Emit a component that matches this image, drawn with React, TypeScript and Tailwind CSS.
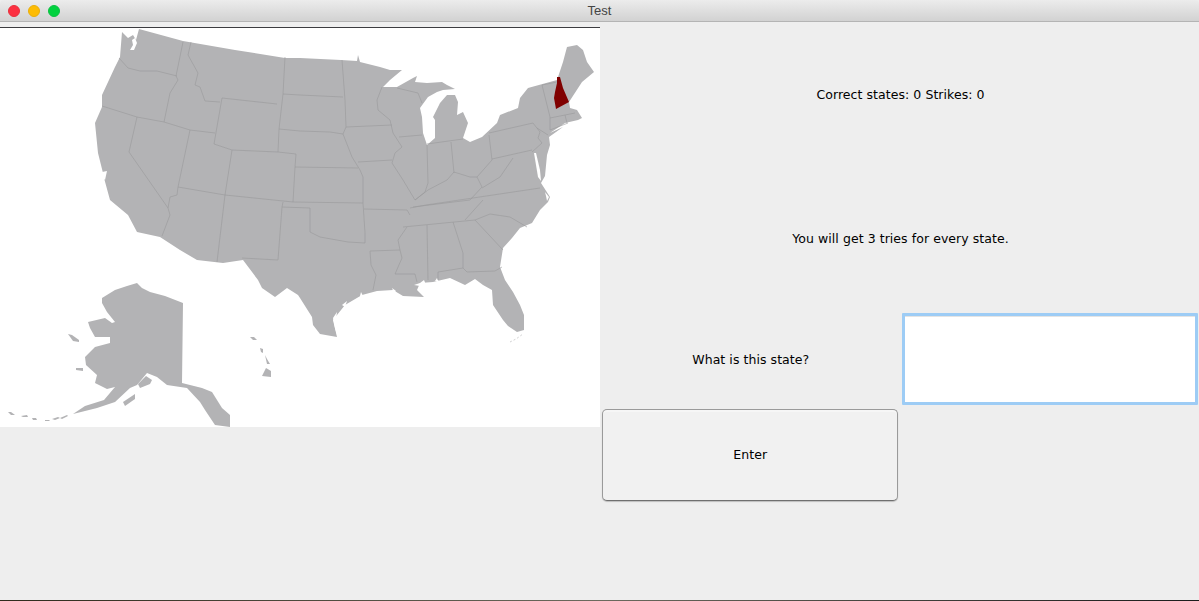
const BORDERS = [
  // west
  "M119 58 128 68 140 71 157 71 177 76",
  "M183 42 176 76 178 80 170 93 164 122",
  "M102 106 137 117 164 122 190 130 215 133",
  "M191 42 188 55 198 73 195 85 200 87 205 101 220 102",
  "M222 98 277 104",
  "M222 98 214 144 232 150 278 152 296 154",
  "M285 57 283 94 279 129 278 152",
  "M283 94 300 95 343 97",
  "M279 129 300 131 330 132 343 134",
  "M296 154 295 167 293 202",
  "M232 150 225 195 293 202",
  "M190 130 178 187 225 195",
  "M225 195 217 262",
  "M137 117 129 152 168 208 170 197 177 195 178 187",
  "M168 208 170 215 162 236",
  "M283 202 282 207 310 208",
  "M282 207 278 260 242 258",
  // plains
  "M295 167 358 168",
  "M293 202 363 203",
  "M310 208 310 232 320 237 348 242 365 243",
  "M364 209 407 210 410 215",
  "M360 170 363 177 363 203 365 233 365 243",
  "M343 134 352 157 360 170",
  "M346 127 392 125",
  "M342 60 345 100 346 127 343 134",
  "M382 87 377 100 378 110 390 120 393 133 402 147 395 153 392 163 403 180 415 200",
  "M358 162 392 160",
  "M399 137 422 135",
  "M427 145 428 183 425 192 415 200",
  // great lakes, ohio valley
  "M397 88 418 93 422 103",
  "M451 142 454 173",
  "M427 144 463 139",
  "M489 135 492 160 477 177",
  "M415 200 428 190 447 180 454 172 470 177 477 177 482 187 470 200",
  "M413 207 470 200",
  "M410 208 426 205 540 188",
  "M403 227 475 220",
  "M465 220 483 200",
  "M482 188 500 177 513 158",
  "M492 159 532 150",
  "M489 133 533 123 540 132 538 138 542 143 532 152",
  "M542 85 550 117 550 130",
  "M537 128 548 135",
  "M550 118 575 113",
  "M550 130 568 123",
  "M565 115 567 123",
  "M542 85 557 82",
  // south
  "M427 225 428 280",
  "M407 227 398 240 400 250 402 258 395 274 415 274 417 282",
  "M370 251 400 250",
  "M370 251 371 265 376 275 373 290",
  "M453 222 463 253 463 268",
  "M438 272 463 268 467 272 495 271 502 267",
  "M438 272 438 280",
  "M475 220 503 250",
  "M475 220 490 214 510 217 527 227",
];

// white nicks in the coast: puget sound, chesapeake, sounds, gulf bays, panhandle channels
const SEA = [
  "M132 40 135 38 137 43 134 50 130 50 133 45Z",
  "M102 172 107 171 105 180 103 178Z",
  "M534 153 536 153 540 170 541 181 538 177 536 165Z",
  "M545 192 549 197 547 201 546 196Z",
  "M414 285 420 283 424 280 426 285 420 286Z",
  "M392 288 396 291 394 293Z",
  "M435 281 437 278 439 282Z",
  "M361 292 363 296 360 296Z",
  "M333 318 337 312 336 320 337 335 335 328Z",
  "M342 305 347 301 345 307Z",
  "M205 392 209 396 208 402 205 398Z",
  "M211 400 214 404 216 412 212 408Z",
  "M218 408 221 412 222 420 219 416Z",
  "M208 408 212 416 214 423 209 416Z",
  "M111 323 116 320 116 323Z",
];

function UsMap() {
  return (
    <svg viewBox="0 28 600 399" className="block h-[399px] w-[600px] bg-white">
      {/* lower 48 */}
      <path
        fill="#b3b3b5"
        d="M122 32 128 38 133 35 136 40 139 29 183 41 235 50 285 58 300 58 341 60 357 61 358 55 360 62 380 67 390 70 402 70 390 80 383 87 397 87 413 78 417 76 415 82 427 83 442 82 447 85 455 89 443 90 437 92 428 97 420 108 422 117 423 133 427 145 435 138 435 120 433 117 440 103 447 95 455 95 458 102 457 115 463 112 468 123 463 138 470 142 482 137 497 123 500 115 518 108 520 98 528 88 557 80 563 62 567 47 577 45 583 50 587 62 594 72 582 82 569 102 570 108 577 110 582 118 578 120 565 123 550 133 563 127 549 137 550 145 547 155 545 176 541 183 550 197 548 202 540 210 532 223 520 228 512 238 503 248 500 267 505 280 513 292 520 305 524 315 524 330 517 332 508 326 503 320 493 305 492 290 483 285 475 279 465 285 450 278 433 282 420 283 417 290 424 297 403 296 393 290 377 291 362 295 345 305 333 320 337 337 320 334 313 325 312 317 300 298 298 295 287 288 275 297 262 288 258 280 243 260 223 263 197 260 180 250 160 237 137 232 128 215 110 200 104 178 103 173 98 153 95 123 102 107 102 95 115 67 120 57Z"
      />
      <g fill="#fff">
        {SEA.map((d) => (
          <path key={d} d={d} />
        ))}
      </g>
      <g fill="none" stroke="#98989b" strokeWidth="0.6">
        {BORDERS.map((d) => (
          <path key={d} d={d} />
        ))}
      </g>
      {/* new hampshire */}
      <path fill="#800000" d="M557 77 560 77 563 88 569 102 556 109 554 98 555 92 557 83Z" />
      {/* florida keys */}
      <path fill="none" stroke="#b3b3b5" strokeWidth="0.6" strokeDasharray="2 2" d="M510 342 516 339 523 334" />
      {/* alaska */}
      <g fill="#b3b3b5">
        <path d="M102 298 115 290 127 286 137 283 142 288 150 292 165 296 183 303 182 383 190 385 202 388 212 392 222 408 230 415 230 427 215 425 205 410 200 402 187 388 167 385 157 377 147 373 137 385 130 388 115 402 97 408 85 411 73 414 85 406 104 400 115 387 107 389 95 383 97 375 86 365 85 357 95 347 110 343 110 337 95 337 90 328 88 322 105 318 112 323 115 322 107 312 102 303Z" />
        <path d="M68 334 72 335 79 340 79 342 73 341Z" />
        <path d="M76 368 83 368 83 371 76 370Z" />
        <path d="M123 402 135 394 135 399 125 406Z" />
        <path d="M138 384 146 376 152 380 150 384 140 388Z" />
        {/* aleutians */}
        <path d="M8 412 11 412 15 415 11 415Z" />
        <path d="M21 416 27 415 28 417 23 417Z" />
        <path d="M32 418 36 418 37 420 33 420Z" />
        <path d="M45 420 50 420 49 421 45 421Z" />
        <path d="M52 419 58 417 60 418 55 420Z" />
        <path d="M60 418 67 415 68 416 62 419Z" />
      </g>
      {/* hawaii */}
      <g fill="#b3b3b5">
        <path d="M250 337 254 337 257 340 253 340Z" />
        <path d="M260 348 263 349 263 353 261 352Z" />
        <path d="M265 355 267 359 270 364 267 364Z" />
        <path d="M262 376 266 368 271 371 271 377Z" />
      </g>
    </svg>
  );
}

function Light({ color, border }: { color: string; border: string }) {
  return <span className={`size-3 rounded-full border ${color} ${border}`} />;
}

export default function App() {
  return (
    <div className="flex h-[601px] w-[1199px] flex-col overflow-hidden bg-[#eeeeee] font-['DejaVu_Sans',sans-serif] text-[12.5px] tracking-[0.06px] text-black">
      {/* title bar */}
      <div className="relative flex h-[22px] shrink-0 items-center justify-center rounded-t-[4px] border-b border-[#b4b4b4] bg-gradient-to-b from-[#ececec] to-[#d2d2d2]">
        <div className="absolute left-[8px] top-[5px] flex gap-2">
          <Light color="bg-[#fc3041]" border="border-[#e8303c]" />
          <Light color="bg-[#fdbc04]" border="border-[#e9ae0a]" />
          <Light color="bg-[#02d23f]" border="border-[#0cc043]" />
        </div>
        <span className="font-['Liberation_Sans',sans-serif] text-[13px] tracking-normal text-[#444444]">Test</span>
      </div>

      <div className="flex flex-1">
        {/* map column */}
        <div className="w-[600px] shrink-0 pt-[5px]">
          <div className="border-t border-[#3c3c40]">
            <UsMap />
          </div>
        </div>

        {/* form column */}
        <div className="flex w-[599px] flex-col">
          <div className="flex h-[144px] items-center justify-center pl-[2px] pt-[2px]">Correct states: 0 Strikes: 0</div>
          <div className="flex h-[144px] items-center justify-center pl-[2px] pt-[2px]">You will get 3 tries for every state.</div>
          <div className="grid h-[99px] grid-cols-2">
            <div className="flex items-center justify-center pl-[2px] pt-[2px]">What is this state?</div>
            <div className="pl-[2px] pr-px pt-[3px] pb-[4px]">
              <input
                type="text"
                className="block h-full w-full rounded-[1px] border-[3px] border-[#9dccf5] bg-white shadow-[inset_0_1px_0_#e4e4e4] outline-none"
              />
            </div>
          </div>
          <div className="grid grid-cols-2">
            <div className="pl-[2px] pr-[2px]">
              <button className="block h-[92px] w-full rounded-[5px] border border-[#9a9a9a] border-b-[#6f6f6f] bg-[#f1f1f1] pl-px shadow-[inset_0_2px_0_#f6f6f6,0_1px_1px_#bdbdbd]">
                Enter
              </button>
            </div>
          </div>
        </div>
      </div>

      {/* desktop showing under the window edge */}
      <div className="h-px shrink-0 bg-gradient-to-r from-[#2f2a1c] via-[#6c6a5e] to-[#1c1c1c]" />
    </div>
  );
}
